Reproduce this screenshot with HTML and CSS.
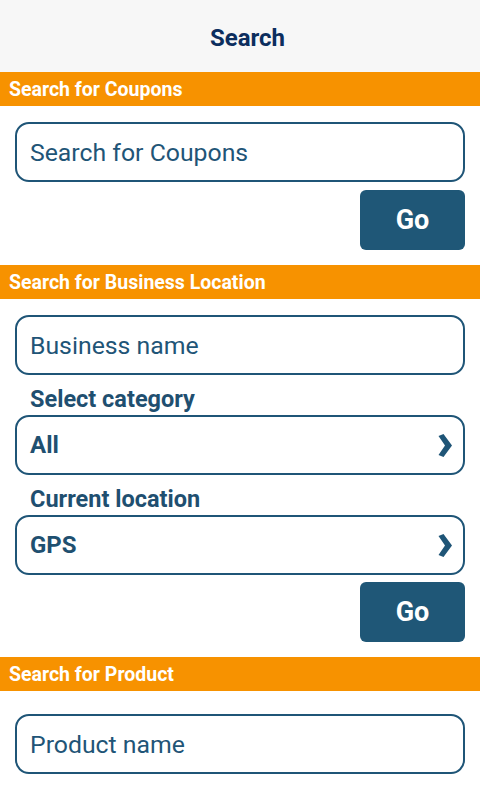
FILE: index.html
```html
<!DOCTYPE html>
<html lang="en">
<head>
<meta charset="utf-8">
<title>Search</title>
<link rel="stylesheet" href="styles.css">
</head>
<body>
<header class="topbar"><h1 class="title">Search</h1></header>

<section class="section">
  <h2 class="bar">Search for Coupons</h2>
  <div class="content">
    <input class="field" type="text" placeholder="Search for Coupons">
    <div class="actions"><button class="go">Go</button></div>
  </div>
</section>

<section class="section">
  <h2 class="bar">Search for Business Location</h2>
  <div class="content">
    <input class="field" type="text" placeholder="Business name">
    <div class="label">Select category</div>
    <div class="select"><span>All</span>
      <svg class="chev" width="14" height="23" viewBox="0 0 14 23"><polygon points="0.5,2 5.5,0 14,11.5 5.5,23 0.5,21 7,11.5" fill="#1f5577"/></svg>
    </div>
    <div class="label">Current location</div>
    <div class="select"><span>GPS</span>
      <svg class="chev" width="14" height="23" viewBox="0 0 14 23"><polygon points="0.5,2 5.5,0 14,11.5 5.5,23 0.5,21 7,11.5" fill="#1f5577"/></svg>
    </div>
    <div class="actions tight"><button class="go">Go</button></div>
  </div>
</section>

<section class="section">
  <h2 class="bar">Search for Product</h2>
  <div class="content product">
    <input class="field" type="text" placeholder="Product name">
  </div>
</section>
</body>
</html>
```

FILE: styles.css
```css
* { box-sizing: border-box; }
html, body {
  margin: 0;
  padding: 0;
  background: #ffffff;
  font-family: Roboto, "Liberation Sans", sans-serif;
}
.topbar {
  height: 72px;
  padding: 4px 0 0 15px;
  background: #f7f7f7;
  display: flex;
  align-items: center;
  justify-content: center;
}
.title {
  margin: 0;
  font-size: 24px;
  font-weight: 700;
  color: #0c2e5e;
  line-height: 28px;
}
.bar {
  margin: 0;
  height: 34px;
  padding: 2px 0 0 9px;
  line-height: 32px;
  background: #f79200;
  color: #ffffff;
  font-size: 19.5px;
  font-weight: 700;
}
.content {
  padding: 16px 15px 15px;
  display: flex;
  flex-direction: column;
}
.content.product { padding-top: 23px; }
.field {
  display: block;
  width: 100%;
  height: 60px;
  margin: 0;
  border: 2px solid #1f5577;
  border-radius: 14px;
  padding: 0 13px;
  font-family: Roboto, "Liberation Sans", sans-serif;
  font-size: 24.8px;
  color: #1f5577;
  background: #ffffff;
  outline: none;
}
.field::placeholder { color: #1f5577; opacity: 1; }
.actions {
  display: flex;
  justify-content: flex-end;
  margin-top: 8px;
}
.actions.tight { margin-top: 7px; }
.go {
  width: 105px;
  height: 60px;
  border: none;
  border-radius: 6px;
  background: #1f5777;
  color: #ffffff;
  font-family: Roboto, "Liberation Sans", sans-serif;
  font-size: 27px;
  font-weight: 700;
  padding: 0;
}
.label {
  padding: 10px 0 2px 15px;
  line-height: 28px;
  font-size: 23.5px;
  font-weight: 700;
  color: #1f4f70;
}
.select {
  height: 60px;
  border: 2px solid #1f5577;
  border-radius: 14px;
  padding: 0 11px 0 13px;
  display: flex;
  align-items: center;
  justify-content: space-between;
  font-size: 24px;
  font-weight: 700;
  color: #1f5070;
}
.chev { display: block; }
```
